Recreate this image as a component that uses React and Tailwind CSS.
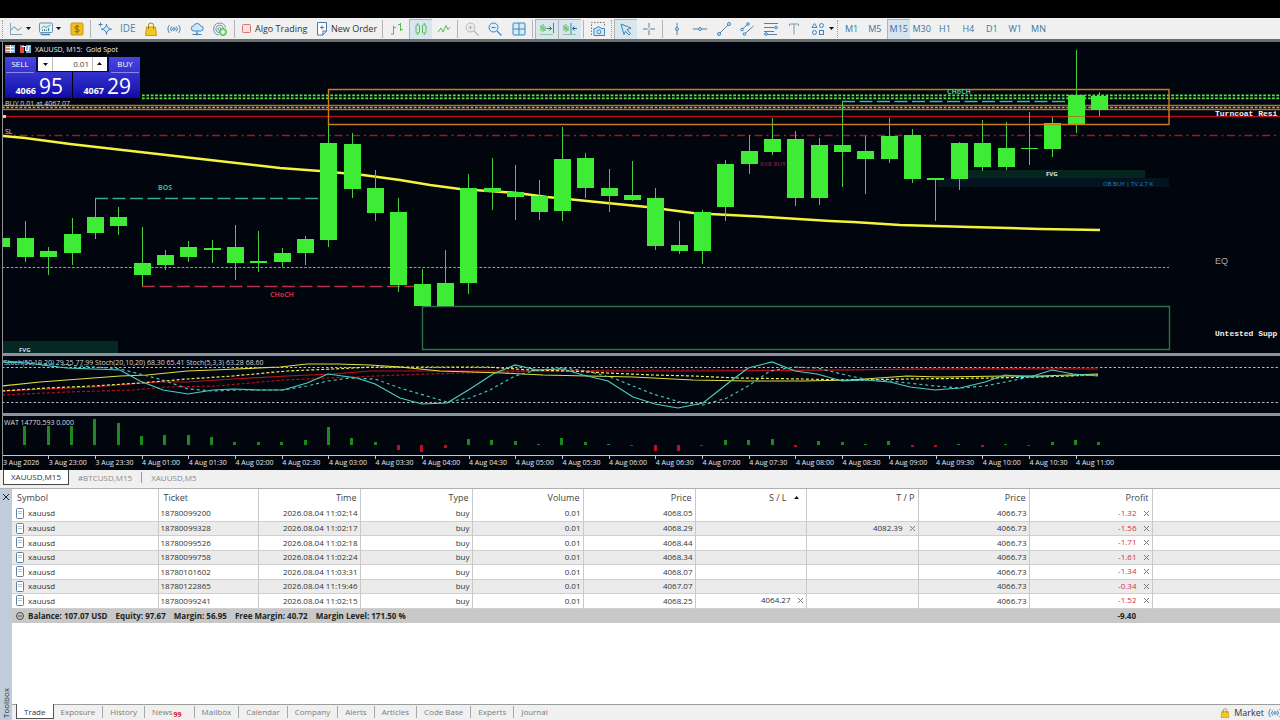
import React, { useState } from 'react';

const STEP = 23.35;
const FIRST_X = 25.3;
const barX = (i) => FIRST_X + STEP * i;

// [high, open/close top, open/close bottom, low]
const CANDLES = [
  [221, 238, 257, 262], [247, 251, 257, 275], [218, 234, 253, 265], [198, 217, 233, 239],
  [207, 217, 226, 235], [227, 263, 275, 286], [250, 255, 265, 270], [241, 247, 257, 262],
  [240, 248, 250, 263], [225, 247, 263, 280], [231, 261, 263, 272], [248, 253, 262, 267],
  [236, 239, 253, 265], [90, 143, 240, 247], [133, 144, 189, 198], [170, 188, 213, 221],
  [198, 212, 285, 292], [269, 284, 306, 306], [250, 283, 306, 306], [174, 188, 283, 294],
  [158, 188, 192, 210], [165, 192, 197, 220], [180, 196, 212, 220], [127, 159, 211, 221],
  [153, 158, 188, 198], [169, 188, 196, 212], [161, 195, 200, 201], [188, 198, 246, 250],
  [221, 245, 251, 254], [210, 212, 251, 264], [160, 164, 207, 221], [135, 151, 164, 174],
  [118, 139, 152, 155], [131, 139, 198, 206], [138, 145, 198, 205], [102, 145, 152, 187],
  [136, 151, 159, 194], [118, 136, 159, 163], [129, 135, 179, 183], [178, 178, 180, 221],
  [142, 143, 179, 190], [120, 143, 167, 171], [122, 148, 167, 170], [112, 148, 149, 165],
  [117, 123, 149, 157], [50, 95, 125, 133], [92, 96, 110, 116],
];

// positive values go up in green, negative ones down in red
const WAT = [
  19, 19, 19, 26, 22, 9, 10, 10, 8, 3, 3, 3, 5, 18, 7, 3, -5, -7, -3, 6, 5, 4, 1, 7, 3, 1, -1,
  -6, -6, -1, 5, 5, 6, -2, 4, 3, 1, 4, -2, -2, 1, -2, 1, -1, 3, 5, 3,
];

const MA = '2,136 25,138 70,144 140,152 210,160 280,168 320,171 363,175 400,180 430,185 460,189 517,193 547,197 587,201 647,207 693,213 710,214 767,217 830,221 853,222 900,225 970,227 1040,229 1100,230';

const STOCH = [
  { color: '#c01018', points: '2,391 93,387 157,382 187,382 233,379 287,376 333,374 370,371 430,371 520,371 703,371 840,370 913,369 1098,369' },
  { color: '#b01018', dash: '3 2', points: '2,395 67,392 133,390 167,387 217,386 283,380 353,377 400,375 430,374 500,372 620,370 840,370 950,369 1098,368' },
  { color: '#dede3c', points: '2,386 40,382 80,379 120,376 147,375 187,371 213,370 280,367 307,364 337,364 370,365 400,367 430,370 440,371 503,373 543,375 633,377 693,380 747,381 803,381 850,380 907,376 940,377 1007,376 1040,376 1098,374' },
  { color: '#eeee5a', dash: '3 2', points: '2,391 47,388 93,386 140,383 187,379 233,376 287,371 333,369 373,367 400,367 487,367 530,370 570,371 607,373 653,375 693,376 737,378 803,379 850,380 907,379 990,378 1040,377 1098,375' },
  { color: '#4ccfc4', points: '2,362 27,363 50,366 67,368 120,370 140,381 163,390 188,394 213,390 233,389 260,390 283,390 307,383 328,374 357,378 375,384 400,398 422,404 447,403 470,389 493,374 515,365 537,370 563,369 583,375 608,381 633,397 655,404 678,408 703,403 727,384 748,368 772,362 795,371 817,374 842,381 865,380 890,382 910,387 935,390 960,388 985,382 1005,375 1030,377 1052,370 1073,374 1098,376' },
  { color: '#4cc0b8', dash: '3 3', points: '2,361 50,364 95,367 120,369 140,374 163,380 188,389 213,391 237,390 283,390 307,386 328,381 350,378 375,379 400,388 430,397 447,402 470,398 490,390 515,376 537,370 563,368 587,371 613,378 653,394 680,402 703,405 727,398 748,386 770,371 795,367 817,368 850,376 865,379 890,381 935,386 960,388 985,386 1005,382 1030,377 1052,376 1098,375' },
];

const TIMES = [
  '3 Aug 2026', '3 Aug 23:00', '3 Aug 23:30', '4 Aug 01:00', '4 Aug 01:30', '4 Aug 02:00',
  '4 Aug 02:30', '4 Aug 03:00', '4 Aug 03:30', '4 Aug 04:00', '4 Aug 04:30', '4 Aug 05:00',
  '4 Aug 05:30', '4 Aug 06:00', '4 Aug 06:30', '4 Aug 07:00', '4 Aug 07:30', '4 Aug 08:00',
  '4 Aug 08:30', '4 Aug 09:00', '4 Aug 09:30', '4 Aug 10:00', '4 Aug 10:30', '4 Aug 11:00',
];

const POSITIONS = [
  { ticket: '18780099200', time: '2026.08.04 11:02:14', open: '4068.05', profit: '-1.32' },
  { ticket: '18780099328', time: '2026.08.04 11:02:17', open: '4068.29', tp: '4082.39', profit: '-1.56' },
  { ticket: '18780099526', time: '2026.08.04 11:02:18', open: '4068.44', profit: '-1.71' },
  { ticket: '18780099758', time: '2026.08.04 11:02:24', open: '4068.34', profit: '-1.61' },
  { ticket: '18780101602', time: '2026.08.04 11:03:31', open: '4068.07', profit: '-1.34' },
  { ticket: '18780122865', time: '2026.08.04 11:19:46', open: '4067.07', profit: '-0.34' },
  { ticket: '18780099241', time: '2026.08.04 11:02:15', open: '4068.25', sl: '4064.27', profit: '-1.52' },
];

const TIMEFRAMES = ['M1', 'M5', 'M15', 'M30', 'H1', 'H4', 'D1', 'W1', 'MN'];
const CHART_TABS = ['XAUUSD,M15', '#BTCUSD,M15', 'XAUUSD,M5'];
const TOOLBOX_TABS = ['Trade', 'Exposure', 'History', 'News', 'Mailbox', 'Calendar', 'Company', 'Alerts', 'Articles', 'Code Base', 'Experts', 'Journal'];

const BLUE = '#3f86bd';
const GREEN = '#4fc04f';

const Icon = ({ children, stroke = BLUE }) => (
  <svg width="14" height="14" viewBox="0 0 14 14" fill="none" stroke={stroke} strokeWidth="1" className="shrink-0">
    {children}
  </svg>
);

const Caret = () => (
  <svg width="5" height="3" viewBox="0 0 5 3" className="shrink-0"><path d="M0 0h5L2.500 3z" fill="#111" /></svg>
);

const LineIcon = () => (
  <Icon stroke="#8fa0ad"><path d="M1.500 1v11.500H13" /><path d="M2.500 8c1.500-3 3-4 4.500-1.500s3 1.500 5.500-1" stroke="#4b86a8" /></Icon>
);
const ScreenIcon = () => (
  <Icon stroke="#6a94ad">
    <rect x=".5" y="1" width="13" height="9.500" rx="1" fill="#e6f0f5" />
    <path d="M3 12.500h8M1.500 11.500l1.500 1" stroke="#4b7fa8" strokeWidth="1.300" />
    <path d="M2.500 6l2.500-2 2 1.500L11.500 3" stroke="#5fae7c" /><path d="M3.500 9V7.500M5.500 9V7M7.500 9V7.500M9.500 9V6" stroke="#4b7fa8" />
  </Icon>
);
const DollarIcon = () => (
  <Icon stroke="#c89a10">
    <rect x="1" y="1" width="12" height="12" rx="1" fill="#f2be1c" />
    <path d="M9.300 4.800C8.500 3.700 5 3.700 5 5.500S9.200 6.900 9.200 8.700 5.500 10.300 4.700 9M7 2.800v8.600" stroke="#8a6208" />
  </Icon>
);
const SparkleIcon = () => (
  <Icon>
    <path d="M8.500 2c.4 3.500 1.500 4.600 5 5.200-3.500.6-4.600 1.800-5 5.300-.5-3.500-1.600-4.700-5.200-5.300 3.600-.6 4.700-1.700 5.200-5.200z" fill="#d9edf9" />
    <path d="M2.500.500v4M.500 2.500h4" />
  </Icon>
);
const BagIcon = ({ size = 14 }) => (
  <svg width={size} height={size} viewBox="0 0 14 14" fill="none" stroke="#c99c12" className="shrink-0">
    <path d="M2.500 5h9l1 8.500h-11z" fill="#f2c81e" /><path d="M4.500 7V3.500a2.500 2.500 0 0 1 5 0V7" stroke="#a57f10" />
  </svg>
);
const SignalIcon = () => (
  <Icon>
    <circle cx="7" cy="7" r="1.300" /><path d="M4.800 4.500a3.500 3.500 0 0 0 0 5M9.200 4.500a3.500 3.500 0 0 1 0 5M2.500 3a5.800 5.800 0 0 0 0 8M11.500 3a5.800 5.800 0 0 1 0 8" />
  </Icon>
);
const CloudIcon = () => (
  <Icon>
    <path d="M4 9a2.600 2.600 0 0 1-.2-5.200A3.600 3.600 0 0 1 10.600 4 2.500 2.500 0 0 1 10.800 9z" fill="#cfe7f6" />
    <path d="M7 9v2M2.500 12.500h9" /><circle cx="7" cy="12" r="1" fill="#f0f0f0" />
  </Icon>
);
const RadarIcon = () => (
  <Icon stroke="#6f96a8">
    <path d="M12.500 5.500A6 6 0 1 0 6 13" /><path d="M10.300 6A3.800 3.800 0 1 0 6 10.700" /><circle cx="6.500" cy="7" r="1.500" />
    <circle cx="10" cy="10" r="3.500" fill="#8fdf8f" stroke="#4fb04f" /><path d="M10 8v4M8 10h4" stroke="#fff" strokeWidth="1.200" />
  </Icon>
);
const StopIcon = () => (
  <svg width="9" height="9" viewBox="0 0 9 9"><rect x=".5" y=".5" width="8" height="8" rx="1" fill="#fbe0de" stroke="#d8746e" /></svg>
);
const OrderIcon = () => (
  <Icon stroke="#4a7ba8"><path d="M2.500.500h9v8.500l-3.500 4h-5.500z" fill="#fff" /><path d="M11.500 9H8v4" /><path d="M7 3.500v4M5 5.500h4" /></Icon>
);
const BarsIcon = () => (
  <Icon stroke={GREEN}><path d="M3.500 3.500v9M1 12h2.500M3.500 5.500H6M10.500 1v8M8 2.500h2.500M10.500 7.500H13" /></Icon>
);
const CandlesIcon = () => (
  <Icon stroke={GREEN}><rect x="2" y="3" width="3.500" height="8" rx="1" /><rect x="8.500" y="3" width="3.500" height="8" rx="1" /><path d="M3.700 1v2M3.700 11v2M10.300 1v2M10.300 11v2" /></Icon>
);
const ZigIcon = () => (
  <Icon stroke={GREEN}><path d="M1 10l3-4 2 4 3-6.500 2 4L13 5" /></Icon>
);
const ZoomIcon = ({ color, plus }) => (
  <Icon stroke={color}><circle cx="5.500" cy="5.500" r="4.500" fill={plus ? '#ececec' : '#dceefa'} /><path d="M9 9l4.500 4.500M3.500 5.500h4" strokeWidth="1.200" />{plus && <path d="M5.500 3.500v4" />}</Icon>
);
const TileIcon = () => (
  <Icon><rect x="1" y="1" width="12" height="12" rx="1" fill="#d5ebf8" /><path d="M7 1v12M1 7h12" /></Icon>
);
const ScrollIcon = () => (
  <Icon stroke={GREEN}><path d="M1 3v6M3 2v8M5 4v5M1 5l4 3" /><path d="M6.500 6.500h5M9.500 4.500l2 2-2 2" stroke="#2f7f4f" /><path d="M13.500 1v10" stroke={BLUE} /><path d="M0 12.500h13" stroke="#8fc7a0" /></Icon>
);
const ShiftIcon = () => (
  <Icon stroke={GREEN}><path d="M1 3v6M3 2v8M5 4v5M1 5l4 3" /><path d="M8 1v11" stroke={BLUE} /><path d="M9.500 6.500H14M11.500 4.500l-2 2 2 2" stroke="#2f5f7f" /><path d="M0 12.500h13" stroke="#8fc7a0" /></Icon>
);
const CameraIcon = () => (
  <Icon><path d="M.500 13V.500h13V5" stroke="#777" strokeDasharray="1.500 1.500" /><path d="M3 6.500h2l1-1.500h3l1 1.500h3.500v7H3z" fill="#d5ebf8" /><circle cx="8" cy="9.800" r="2" /></Icon>
);
const CursorIcon = () => (
  <Icon><path d="M2 2l10 4-4 1.800 3.500 3.700-1.500 1.500L6.500 9.300 5 12.500z" fill="#cfe5f4" /></Icon>
);
const CrossIcon = () => (
  <Icon stroke="#5a7f9c"><path d="M7 1v12M1 7h12" /><path d="M5.500 7h3M7 5.500v3" stroke="#f0f0f0" /></Icon>
);
const VLineIcon = () => <Icon stroke="#5a7f9c"><path d="M7 1v12" /><circle cx="7" cy="7" r="1.500" fill="#d5ebf8" stroke={BLUE} /></Icon>;
const HLineIcon = () => <Icon stroke="#5a7f9c"><path d="M0 7h14" /><circle cx="7" cy="7" r="1.500" fill="#d5ebf8" stroke={BLUE} /></Icon>;
const TrendIcon = () => (
  <Icon stroke="#5a7f9c"><path d="M2 12L12 2" /><circle cx="2" cy="12" r="1.500" fill="#d5ebf8" stroke={BLUE} /><circle cx="12" cy="2" r="1.500" fill="#d5ebf8" stroke={BLUE} /></Icon>
);
const ChannelIcon = () => (
  <Icon stroke="#5a7f9c"><path d="M2 7.500L8 2M4 12.500L13.500 4" /><circle cx="2" cy="7.500" r="1.300" fill="#d5ebf8" stroke={BLUE} /><circle cx="8" cy="2" r="1.300" fill="#d5ebf8" stroke={BLUE} /><circle cx="4.500" cy="12" r="1.300" fill="#d5ebf8" stroke={BLUE} /></Icon>
);
const FiboIcon = () => (
  <Icon stroke="#5a7f9c"><path d="M0 1.500h14M0 5.500h14M0 9.500h10M0 12.500h13" /><circle cx="12" cy="5.500" r="1.300" fill="#d5ebf8" stroke={BLUE} /><circle cx="2" cy="12" r="1.300" fill="#d5ebf8" stroke={BLUE} /></Icon>
);
const TextIcon = () => <Icon stroke="#7d98ab"><path d="M2.500 4V2h9v2M7 2v10.500" /></Icon>;
const ShapesIcon = () => (
  <Icon><path d="M3.500 1.500L6 5.500H1z" /><circle cx="10.500" cy="3.500" r="2" /><circle cx="3.500" cy="10.500" r="2" /><rect x="8.500" y="8.500" width="4" height="4" /></Icon>
);

const ToolButton = ({ label, active, children }) => (
  <button
    aria-label={label}
    className={`flex h-5 w-[23px] shrink-0 items-center justify-center ${active ? 'border-l border-t border-[#aab4bb] bg-[#dae6ee]' : ''}`}
  >
    {children}
  </button>
);

const Sep = () => <span className="mx-[2px] h-[18px] w-px shrink-0 bg-[#b4b4b4]" />;
const Grip = () => <span className="mx-[2px] h-[18px] w-px shrink-0 border-l border-dotted border-[#999]" />;

const Toolbar = () => {
  const [timeframe, setTimeframe] = useState('M15');
  return (
    <div className="flex h-[21px] items-center overflow-hidden bg-[#f0f0f0] text-[9px] text-[#333]">
      <Grip />
      <button aria-label="Line chart" className="flex w-[30px] shrink-0 items-center gap-[3px] pl-1"><LineIcon /><Caret /></button>
      <button aria-label="Templates" className="flex w-[30px] shrink-0 items-center gap-[3px] pl-1"><ScreenIcon /><Caret /></button>
      <ToolButton label="Trading"><DollarIcon /></ToolButton>
      <Sep />
      <div className="flex w-[139px] shrink-0 justify-between">
        <ToolButton label="Assistant"><SparkleIcon /></ToolButton>
        <button className="w-[23px] shrink-0 text-center text-[10px] text-[#4a86b0]">IDE</button>
        <ToolButton label="Market"><BagIcon /></ToolButton>
        <ToolButton label="Signals"><SignalIcon /></ToolButton>
        <ToolButton label="Cloud"><CloudIcon /></ToolButton>
        <ToolButton label="Hosting"><RadarIcon /></ToolButton>
      </div>
      <Sep />
      <button className="flex w-[78px] shrink-0 items-center gap-1 whitespace-nowrap pl-[5px]"><StopIcon />Algo Trading</button>
      <button className="flex w-[65px] shrink-0 items-center gap-[2px] whitespace-nowrap"><OrderIcon />New Order</button>
      <Sep />
      <div className="flex w-[70px] shrink-0 justify-between">
        <ToolButton label="Bars"><BarsIcon /></ToolButton>
        <ToolButton label="Candles" active><CandlesIcon /></ToolButton>
        <ToolButton label="Line"><ZigIcon /></ToolButton>
      </div>
      <Sep />
      <div className="flex w-[70px] shrink-0 justify-between">
        <ToolButton label="Zoom in"><ZoomIcon color="#b5b5b5" plus /></ToolButton>
        <ToolButton label="Zoom out"><ZoomIcon color={BLUE} /></ToolButton>
        <ToolButton label="Tile windows"><TileIcon /></ToolButton>
      </div>
      <Sep />
      <ToolButton label="Auto scroll" active><ScrollIcon /></ToolButton>
      <ToolButton label="Chart shift" active><ShiftIcon /></ToolButton>
      <Sep />
      <ToolButton label="Screenshot"><CameraIcon /></ToolButton>
      <Grip />
      <ToolButton label="Cursor" active><CursorIcon /></ToolButton>
      <ToolButton label="Crosshair"><CrossIcon /></ToolButton>
      <Sep />
      <div className="flex w-[164px] shrink-0 justify-between">
        <ToolButton label="Vertical line"><VLineIcon /></ToolButton>
        <ToolButton label="Horizontal line"><HLineIcon /></ToolButton>
        <ToolButton label="Trend line"><TrendIcon /></ToolButton>
        <ToolButton label="Channel"><ChannelIcon /></ToolButton>
        <ToolButton label="Fibonacci"><FiboIcon /></ToolButton>
        <ToolButton label="Text"><TextIcon /></ToolButton>
        <ToolButton label="Shapes"><ShapesIcon /></ToolButton>
      </div>
      <button aria-label="More shapes" className="mr-px flex h-5 w-[5px] shrink-0 items-center"><Caret /></button>
      <Grip />
      <div className="flex w-[210px] shrink-0 justify-between">
        {TIMEFRAMES.map((tf) => (
          <button
            key={tf}
            onClick={() => setTimeframe(tf)}
            className={`h-5 w-[23px] shrink-0 text-center text-[#3d74a0] ${tf === timeframe ? 'border-l border-t border-[#aab4bb] bg-[#d6e4ef]' : ''}`}
          >
            {tf}
          </button>
        ))}
      </div>
    </div>
  );
};

const OneClick = () => (
  <div className="absolute left-[2px] top-[15px] flex gap-px text-white">
    <button className="flex h-[41px] w-[67px] flex-col justify-between bg-linear-to-b from-[#4a44e4] to-[#1206a8] px-px text-left">
      <span className="w-7 border-b border-[#8a88ee] pb-[2px] text-center text-[8px] leading-[13px]">SELL</span>
      <span className="flex items-baseline justify-end gap-[3px] pr-2 leading-none"><b className="text-[9px]">4066</b><span className="text-[21px] leading-6">95</span></span>
    </button>
    <button className="flex h-[41px] w-[67px] flex-col items-end justify-between bg-linear-to-b from-[#4a44e4] to-[#1206a8] px-px">
      <span className="w-7 border-b border-[#8a88ee] pb-[2px] text-center text-[8px] leading-[13px]">BUY</span>
      <span className="flex items-baseline justify-end gap-[3px] pr-2 leading-none"><b className="text-[9px]">4067</b><span className="text-[21px] leading-6">29</span></span>
    </button>
    <div className="absolute left-[31px] top-0 flex h-[15px] w-[73px] border-x-2 border-b border-[#060a50] bg-white">
      <button aria-label="Less volume" className="flex w-[14px] items-center justify-center"><Caret /></button>
      <input aria-label="Volume" defaultValue="0.01" className="w-[41px] border-x border-[#bbb] bg-white pr-[3px] text-right text-[8px] text-[#444] outline-none" />
      <button aria-label="More volume" className="flex w-[14px] rotate-180 items-center justify-center"><Caret /></button>
    </div>
  </div>
);

const PriceChart = () => (
  <div className="relative">
    <svg className="block h-[311px] w-full" shapeRendering="crispEdges" fill="none">
      <g transform="translate(-3,-42)">
        <rect x="2" y="341" width="116" height="12" fill="#052823" />
        <rect x="968" y="170" width="177" height="8" fill="#05261f" />
        <rect x="937" y="178" width="232" height="9" fill="#031420" />
        <path d="M142 95.300h3000M142 98.300h3000" stroke="#58e844" strokeWidth="1.800" strokeDasharray="2.700 1.680" shapeRendering="auto" />
        <g strokeWidth="1.400" shapeRendering="auto">
          <path d="M2 105.500h3000M2 109.500h3000" stroke="#a8703a" />
          <path d="M2 107.500h3000" stroke="#c8a070" strokeDasharray="2.700 1.680" />
          <path d="M2 116.500h3000" stroke="#b80c14" />
          <path d="M2 135.500h1275" stroke="#a81420" strokeDasharray="8 4 2 3.500" />
          <path d="M422.500 306.500h747v43h-747z" stroke="#2f7048" />
        </g>
        <path d="M2 267.500h1167" stroke="#9a9fa4" strokeDasharray="2.700 1.680" shapeRendering="auto" />
        <g strokeWidth="1.300" strokeDasharray="13 4.500" shapeRendering="auto">
          <path d="M95 198.500h233" stroke="#3ca892" />
          <path d="M142 286.500h275" stroke="#b83044" />
          <path d="M842 101.500h226" stroke="#3cb8a6" />
        </g>
        <polyline points={MA} stroke="#f4f43c" strokeWidth="2.500" shapeRendering="auto" />
        <g fill="#3eec36">
          <rect x="2" y="238" width="8" height="9" />
          {CANDLES.map(([high, top, bottom, low], i) => (
            <g key={i}>
              <rect x={barX(i) - 0.5} y={high} width="1" height={low - high} fill="#46cc3e" />
              <rect x={barX(i) - 8.5} y={top} width="17" height={bottom - top} />
            </g>
          ))}
        </g>
        <path d="M328.500 89.500h840.500v35h-840.500z" stroke="#d07c14" strokeWidth="1.400" shapeRendering="auto" />
        <path d="M1067 116.500h18" stroke="#a08020" />
        <rect x="3" y="115" width="3" height="3" fill="#f4c0c0" />
      </g>
      <g transform="translate(-3,-42)" shapeRendering="auto" fontSize="7" fontWeight="700">
        <text x="35" y="52" fill="#eee" fontWeight="400" className="whitespace-pre">XAUUSD, M15:  Gold Spot</text>
        <text x="5" y="106" fill="#d8d8d8" fontWeight="400">BUY 0.01 at 4067.07</text>
        <text x="5" y="134" fill="#ddd" fontWeight="400">SL</text>
        <text x="158" y="190" fill="#2cb898">BOS</text>
        <text x="270" y="297" fill="#c82c48">CHoCH</text>
        <text x="947" y="94" fill="#2cc8a8">CHoCH</text>
        <text x="19" y="352" fontSize="6" fill="#ddd">FVG</text>
        <text x="1046" y="176" fontSize="6" fill="#e8e8e8">FVG</text>
        <text x="1103" y="186" fontSize="6" fontWeight="400" fill="#2880cc">OB BUY | TV 2.7 K</text>
        <text x="760" y="166" fontSize="6" fill="#6c1830">RVB BUY</text>
        <text x="1215" y="116" fontSize="8" fill="#f0f0f0" className="font-['Liberation_Mono',monospace]">Turncoat Resi</text>
        <text x="1215" y="336" fontSize="8" fill="#f0f0f0" className="font-['Liberation_Mono',monospace]">Untested Supp</text>
        <text x="1215" y="264" fontSize="9" fontWeight="400" fill="#a8a8a8" className="font-['Liberation_Sans',sans-serif]">EQ</text>
      </g>
      <g transform="translate(2,3)">
        <rect width="5" height="8" fill="#e08070" /><rect x="5" width="5" height="8" fill="#88b8e0" />
        <path d="M1 2.500h8M1 5.500h8M5 0v8" stroke="#fff" />
        <rect x="15" width="4" height="8" fill="#e84848" /><rect x="21" width="5" height="8" fill="#78b0e0" />
        <path d="M17 1.500h3v4h3v-4h2" stroke="#fff" />
      </g>
    </svg>
    <OneClick />
  </div>
);

const StochPanel = () => (
  <svg className="block h-[57px] w-full" fill="none">
    <g transform="translate(-3,-356)">
      <path d="M2 367.500h3000M2 402.500h3000" stroke="#b4b8bc" strokeDasharray="2.500 2" />
      <text x="4" y="365" fontSize="7" fill="#d4d4d4">Stoch(50,10,20) 79.25 77.99 Stoch(20,10,20) 68.30 65.41 Stoch(5,3,3) 63.28 68.60</text>
      {STOCH.map(({ color, dash, points }) => (
        <polyline key={color} points={points} stroke={color} strokeWidth="1.200" strokeDasharray={dash} />
      ))}
    </g>
  </svg>
);

const WatPanel = () => (
  <svg className="block h-[54px] w-full" fill="none" shapeRendering="crispEdges">
    <g transform="translate(-3,-416)">
      <text x="4" y="425" fontSize="7" fill="#ddd">WAT 14770.593 0.000</text>
      {WAT.map((v, i) => (
        <rect key={i} x={barX(i) - 2} y={v > 0 ? 445 - v : 445} width="3" height={Math.abs(v)} fill={v > 0 ? '#1c8a1e' : '#c40c1c'} />
      ))}
      <path d="M2 455.500h3000" stroke="#c8c8c8" />
      {TIMES.map((t, i) => {
        const x = 2 + i * STEP * 2;
        return (
          <g key={t}>
            <path d={`M${x} 455v4`} stroke="#c8c8c8" />
            <text x={i === 0 ? 3 : x} y="465" fontSize="7" fill="#e8e8e8">{t}</text>
          </g>
        );
      })}
    </g>
  </svg>
);

const ChartTabs = () => (
  <nav className="flex h-[19px] items-start border-b border-[#b0b0b0] bg-[#f0f0f0] pl-[3px] text-[8px] leading-[14px] text-[#8a8a8a]">
    {CHART_TABS.map((tab, i) => (
      <button
        key={tab}
        className={i === 0
          ? 'h-[15px] border-x border-b border-[#444] bg-white px-[7px] text-[#333]'
          : `my-[2px] px-[9px] leading-[11px] ${i === 1 ? 'border-r border-[#999]' : ''}`}
      >
        {tab}
      </button>
    ))}
  </nav>
);

const CloseMark = ({ label }) => (
  <button aria-label={label} className="ml-[6px] inline-flex h-2 w-[7px] items-center justify-center align-middle">
    <svg width="5" height="5" viewBox="0 0 5 5"><path d="M0 0l5 5M5 0L0 5" stroke="#777" strokeWidth="1" /></svg>
  </button>
);

const cell = 'border-r border-[#c9c9c9] pr-[2px] text-right';
const head = 'border-r border-[#c9c9c9] pr-[3px] text-right font-normal text-[#444]';

const PositionsTable = () => (
  <table className="w-full table-fixed border-collapse whitespace-nowrap text-[8px] leading-none text-[#333]">
    <colgroup>
      <col className="w-[146px]" /><col className="w-[100px]" /><col className="w-[102px]" /><col className="w-[112px]" />
      <col className="w-[111px]" /><col className="w-[112px]" /><col className="w-[111px]" /><col className="w-[112px]" />
      <col className="w-[111px]" /><col className="w-[123px]" /><col />
    </colgroup>
    <thead>
      <tr className="h-[17px] text-[9px]">
        <th className="border-r border-[#c9c9c9] pl-[5px] text-left font-normal text-[#444]">Symbol</th>
        <th className="border-r border-[#c9c9c9] pl-[5px] text-left font-normal text-[#444]">Ticket</th>
        <th className={head}>Time</th>
        <th className={head}>Type</th>
        <th className={head}>Volume</th>
        <th className={head}>Price</th>
        <th className={head}>
          <span className="inline-flex items-center gap-[7px] pr-1">S / L<span className="rotate-180"><Caret /></span></span>
        </th>
        <th className={head}>T / P</th>
        <th className={head}>Price</th>
        <th className={head}>Profit</th>
        <th />
      </tr>
    </thead>
    <tbody>
      {POSITIONS.map((p) => (
        <tr key={p.ticket} className="h-[15px] border-b border-[#cfcfcf] even:h-[14px] even:bg-[#ebebeb]">
          <td className="border-r border-[#c9c9c9] pl-1">
            <span className="flex items-center gap-1">
              <svg width="8" height="11" viewBox="0 0 8 11" fill="#fff" stroke="#5f80a0"><rect x=".5" y=".5" width="7" height="10" rx="1" /><path d="M2.500 3.500h3M2.500 5.500h3" strokeDasharray="1 1" /></svg>
              xauusd
            </span>
          </td>
          <td className="border-r border-[#c9c9c9] pl-[2px]">{p.ticket}</td>
          <td className={cell}>{p.time}</td>
          <td className={cell}>buy</td>
          <td className={cell}>0.01</td>
          <td className={cell}>{p.open}</td>
          <td className={cell}>{p.sl && <>{p.sl}<CloseMark label="Remove stop loss" /></>}</td>
          <td className={cell}>{p.tp && <>{p.tp}<CloseMark label="Remove take profit" /></>}</td>
          <td className={cell}>4066.73</td>
          <td className={`${cell} text-[#d03048]`}>{p.profit}<CloseMark label="Close position" /></td>
          <td />
        </tr>
      ))}
    </tbody>
    <tfoot>
      <tr className="h-[15px] bg-[#c8c8c8] font-bold text-[#222]">
        <td colSpan="9" className="pl-1">
          <span className="flex items-center gap-1">
            <svg width="8" height="8" viewBox="0 0 8 8" fill="none" stroke="#444"><circle cx="4" cy="4" r="3.500" /><path d="M2 4h4" /></svg>
            <span className="flex gap-2">
              <span>Balance: 107.07 USD</span>
              <span>Equity: 97.67</span>
              <span>Margin: 56.95</span>
              <span>Free Margin: 40.72</span>
              <span>Margin Level: 171.50 %</span>
            </span>
          </span>
        </td>
        <td className="pr-4 text-right">-9.40</td>
        <td />
      </tr>
    </tfoot>
  </table>
);

const ToolboxTabs = () => {
  const [tab, setTab] = useState('Trade');
  return (
    <div className="flex h-4 items-start border-t border-[#9a9f9c] bg-[#f0f0f0] pl-1 text-[8px] text-[#7c7c7c]">
      <div className="flex items-start">
        {TOOLBOX_TABS.map((name) => (
          <button
            key={name}
            onClick={() => setTab(name)}
            className={name === tab
              ? '-mt-px h-[15px] border-x border-b border-[#555] bg-white px-[7px] leading-[13px] text-[#333]'
              : 'mt-px flex h-[12px] items-center border-r border-[#aaa] px-[7px] leading-none last:border-r-0'}
          >
            {name}
            {name === 'News' && <span className="ml-px mr-[5px] mt-[5px] text-[7px] font-bold leading-none text-[#d81838]">99</span>}
          </button>
        ))}
      </div>
      <div className="ml-auto flex h-4 items-center gap-1 text-[9px] text-[#333]">
        <BagIcon size={10} />
        <a href="#market">Market</a>
        <span className="w-3 overflow-hidden"><SignalIcon /></span>
      </div>
    </div>
  );
};

const App = () => (
  <div className="flex min-h-screen flex-col overflow-hidden bg-white font-['Open_Sans','Noto_Sans',sans-serif]">
    <div className="h-[18px] bg-black" />
    <Toolbar />
    <main className="border-t-[3px] border-[#68706e] bg-black pl-[2px]">
      <div className="border-l border-[#8c949c] bg-[#01050d]">
        <PriceChart />
        <div className="h-[3px] bg-[#8a929b]" />
        <StochPanel />
        <div className="h-[3px] bg-[#8a929b]" />
        <WatPanel />
      </div>
    </main>
    <ChartTabs />
    <section className="flex flex-1">
      <aside className="flex w-3 shrink-0 flex-col items-center justify-between bg-[#bfcddb] pb-[2px] pt-[5px] text-[#333]">
        <button aria-label="Close toolbox">
          <svg width="6" height="6" viewBox="0 0 6 6" className="block"><path d="M0 0l6 6M6 0L0 6" stroke="#222" /></svg>
        </button>
        <span className="rotate-180 text-[8px] leading-none [writing-mode:vertical-rl]">Toolbox</span>
      </aside>
      <div className="flex min-w-0 flex-1 flex-col justify-between">
        <PositionsTable />
        <ToolboxTabs />
      </div>
    </section>
  </div>
);

export default App;
